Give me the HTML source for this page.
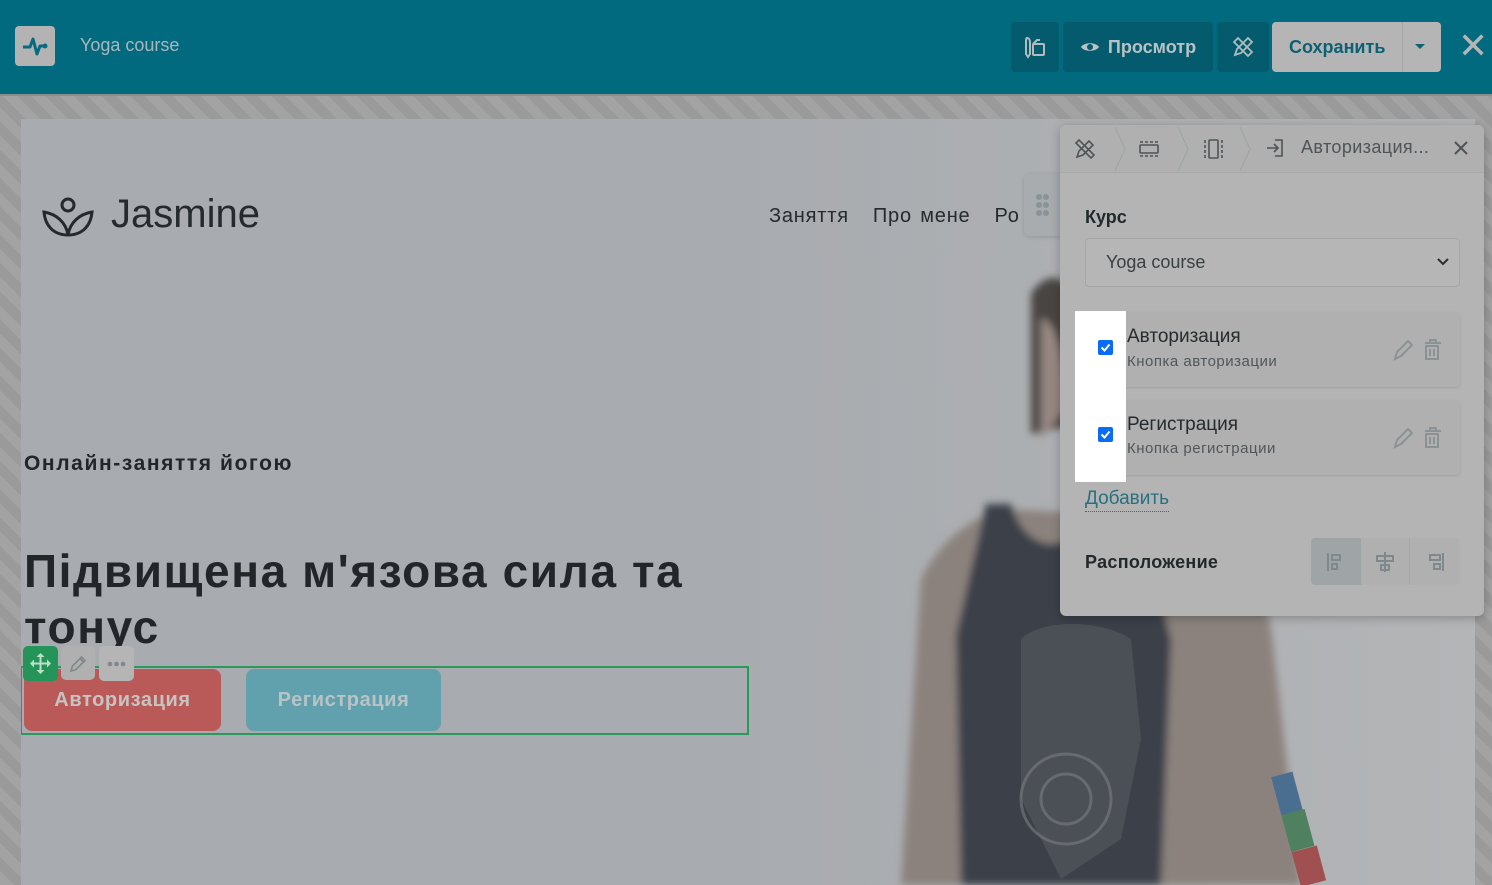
<!DOCTYPE html>
<html><head><meta charset="utf-8"><style>
*{box-sizing:border-box;margin:0;padding:0}
body{width:1492px;height:885px;overflow:hidden;position:relative;font-family:"Liberation Sans","DejaVu Sans",sans-serif;background:repeating-linear-gradient(45deg,#a3a3a3 0 10px,#9a9a9a 10px 20px)}
.top{position:absolute;left:0;top:0;width:1492px;height:94px;background:#026a7f}
.logo{position:absolute;left:15px;top:26px;width:40px;height:40px;background:#b3b3b3;border-radius:4px}
.title{position:absolute;left:80px;top:35px;color:#a9b6ba;font-size:18px}
.tb{position:absolute;top:22px;height:50px;background:#035b6d;border-radius:4px;color:#b9c2c4;font-weight:bold;font-size:18px;display:flex;align-items:center;justify-content:center}
.page{position:absolute;left:21px;top:119px;width:1454px;height:766px;background:#a8abaf;overflow:hidden}
.panel{position:absolute;left:1060px;top:125px;width:424px;height:491px;background:#b4b4b4;border-radius:6px;box-shadow:0 2px 10px rgba(0,0,0,.25)}
.ph{height:48px;border-bottom:1px solid #a8a8a8;background:#b0b0b0;border-radius:6px 6px 0 0;position:relative}
.item{position:absolute;left:25px;width:375px;height:75px;background:#b0b0b0;border-radius:4px;box-shadow:0 1px 2px rgba(0,0,0,.12)}
.chk{position:absolute}
</style></head><body>
<div class="top">
 <div class="logo"><svg width="40" height="40" viewBox="0 0 40 40"><path d="M8 21h7l3-8 4 15 3-8h4" fill="none" stroke="#066a80" stroke-width="3" stroke-linejoin="round"/><circle cx="30" cy="20" r="2.5" fill="#066a80"/></svg></div>
 <div class="title">Yoga course</div>
 <div class="tb" style="left:1011px;width:48px"><svg width="28" height="28" viewBox="0 0 28 28" fill="none" stroke="#b0bcbe" stroke-width="2"><path d="M6 5c2 0 3 2 3 4v12l-2 3-2-3V9c0-2 0-4 1-4z"/><rect x="12" y="11" width="11" height="11" rx="1"/><path d="M12 11l4-4h3"/></svg></div>
 <div class="tb" style="left:1063px;width:150px"><svg width="20" height="14" viewBox="0 0 20 14" style="margin-right:8px"><path d="M1 7c3-5 15-5 18 0-3 5-15 5-18 0z" fill="#b9c2c4"/><circle cx="10" cy="7" r="3" fill="#035b6d"/></svg>Просмотр</div>
 <div class="tb" style="left:1217px;width:52px"><svg width="24" height="24" viewBox="0 0 24 24" fill="none" stroke="#b0bcbe" stroke-width="1.8"><path d="M4 20l2-6L17 3l4 4L10 18z"/><path d="M3 7l4-4 14 14-4 4z"/></svg></div>
 <div class="tb" style="left:1272px;width:169px;background:#b5b5b5;color:#0c6172;justify-content:flex-start;padding-left:17px">Сохранить<span style="position:absolute;left:130px;top:0;width:1px;height:50px;background:#a5a5a5"></span><span style="position:absolute;left:143px;top:22px;border:5px solid transparent;border-top-color:#0c6172"></span></div>
 <div style="position:absolute;left:1458px;top:26px;color:#b5b5b5;font-size:36px;font-weight:bold;line-height:40px">✕</div>
</div>
<div style="position:absolute;left:0;top:94px;width:1492px;height:2px;background:#8c8c8c"></div>
<div class="page">
 <svg style="position:absolute;left:0;top:0" width="1454" height="766" viewBox="0 0 1454 766">
  <defs><filter id="b" x="-20%" y="-20%" width="140%" height="140%"><feGaussianBlur stdDeviation="4"/></filter>
  <linearGradient id="g" x1="0" x2="1"><stop offset="0" stop-color="#a8abaf"/><stop offset="1" stop-color="#b3b5b7"/></linearGradient></defs>
  <rect x="700" y="0" width="754" height="766" fill="url(#g)"/>
  <g filter="url(#b)">
   <path d="M1010 175c15-25 40-20 40 10l5 120-45 10z" fill="#4a4442"/>
   <path d="M1020 200c15 0 25 40 25 90l-25 30z" fill="#958781"/>
   <path d="M900 460c20-40 50-60 80-70l200 10c40 20 60 60 70 110l30 256H880z" fill="#8b827d"/>
   <path d="M965 385l25 0c15 50 60 55 80 5l60 20c10 40 10 80 20 110l-10 246H940l-5-250z" fill="#3a4149"/>
  </g>
  <rect x="1255" y="655" width="22" height="40" fill="#4a6e90" transform="rotate(-15 1265 675)"/>
  <rect x="1265" y="693" width="24" height="38" fill="#4f8060" transform="rotate(-15 1275 712)"/>
  <rect x="1275" y="730" width="26" height="36" fill="#a05050" transform="rotate(-15 1285 748)"/>
  <path d="M1000 520c20-20 80-20 110 0l10 100-20 100-60 40-40-80z" fill="#53575c" opacity=".7"/>
  <circle cx="1045" cy="680" r="45" fill="none" stroke="#7a7d82" stroke-width="3" opacity=".6"/>
  <circle cx="1045" cy="680" r="25" fill="none" stroke="#7a7d82" stroke-width="3" opacity=".6"/>
 </svg>
 <svg style="position:absolute;left:20px;top:76px" width="56" height="42" viewBox="0 0 56 42" fill="none" stroke="#242a2c" stroke-width="3"><circle cx="27" cy="10" r="6"/><path d="M27 40C12 40 4 30 3 17c12 2 22 10 24 23zM27 40c15 0 23-10 24-23-12 2-22 10-24 23z"/></svg>
 <div style="position:absolute;left:90px;top:73px;font-size:40px;color:#252a2c">Jasmine</div>
 <div style="position:absolute;left:748px;top:86px;font-size:20px;color:#252a2c;white-space:nowrap;letter-spacing:.8px;word-spacing:2px">Заняття<span style="margin-left:24px">Про мене</span><span style="margin-left:24px">Ро</span></div>
 <div style="position:absolute;left:3px;top:333px;font-size:21px;font-weight:bold;color:#232628;letter-spacing:1.6px">Онлайн-заняття йогою</div>
 <div style="position:absolute;left:3px;top:424px;font-size:46px;font-weight:bold;color:#232628;line-height:56px;width:760px;letter-spacing:1.6px">Підвищена м'язова сила та тонус</div>
 <div style="position:absolute;left:-1px;top:547px;width:729px;height:69px;border:2px solid #2a9a5a"></div>
 <div style="position:absolute;left:3px;top:550px;width:197px;height:62px;background:#b95a58;border-radius:8px;color:#c8c3c0;font-weight:bold;font-size:20px;letter-spacing:.6px;display:flex;align-items:center;justify-content:center">Авторизация</div>
 <div style="position:absolute;left:225px;top:550px;width:195px;height:62px;background:#61a0ad;border-radius:8px;color:#b8c3c6;font-weight:bold;font-size:20px;letter-spacing:.6px;display:flex;align-items:center;justify-content:center">Регистрация</div>
 <div style="position:absolute;left:2px;top:527px;width:35px;height:35px;background:#249458;border-radius:5px"><svg width="35" height="35" viewBox="0 0 35 35" fill="#c0dccb"><path d="M17.5 7l4 4h-3v5.5h5.5v-3l4 4-4 4v-3h-5.5V24h3l-4 4-4-4h3v-5.5H11v3l-4-4 4-4v3h5.5V11h-3z"/></svg></div>
 <div style="position:absolute;left:40px;top:527px;width:34px;height:34px;background:#b0b0b0;border-radius:5px"><svg width="34" height="34" fill="none" stroke="#80888c" stroke-width="1.6"><path d="M10 25l1.5-5 9-9 3.5 3.5-9 9z M19 12.5l3.5 3.5"/></svg></div>
 <div style="position:absolute;left:78px;top:527px;width:35px;height:35px;background:#b5b5b5;border-radius:5px"><svg width="35" height="35" fill="#80868a"><circle cx="11" cy="18" r="2.3"/><circle cx="17.5" cy="18" r="2.3"/><circle cx="24" cy="18" r="2.3"/></svg></div>
 <div style="position:absolute;left:1003px;top:55px;width:40px;height:62px;background:#a9acae;border-radius:6px 0 0 6px;box-shadow:0 1px 4px rgba(0,0,0,.15)"><svg width="40" height="62"><g fill="#8a9498"><circle cx="15" cy="23" r="3"/><circle cx="22" cy="23" r="3"/><circle cx="15" cy="31" r="3"/><circle cx="22" cy="31" r="3"/><circle cx="15" cy="39" r="3"/><circle cx="22" cy="39" r="3"/></g></svg></div>
</div>
<div class="panel">
 <div class="ph">
  <svg width="424" height="48" viewBox="0 0 424 48" fill="none" stroke="#4e5457" stroke-width="1.6">
   <path d="M17 32l2-6 10-10 4 4-10 10z M16 18l3-3 15 15-3 3z"/>
   <path d="M55 2l10 22-10 22 M118 2l10 22-10 22 M180 2l10 22-10 22" stroke="#9aa3a7" stroke-width="1"/>
   <path d="M80 17h18M80 31h18" stroke-dasharray="3 2"/><rect x="80" y="20" width="18" height="8" rx="1"/>
   <path d="M145 15v18M162 15v18" stroke-dasharray="3 2"/><rect x="149" y="15" width="9" height="18" rx="1"/>
   <path d="M207 23h11M214 19l4 4-4 4M215 15h7v16h-7"/>
   <path d="M395 17l12 12M407 17l-12 12" stroke-width="2"/>
  </svg>
  <div style="position:absolute;left:241px;top:12px;font-size:18px;color:#4e5457;letter-spacing:.4px">Авторизация...</div>
 </div>
 <div style="position:absolute;left:25px;top:82px;font-size:18px;font-weight:bold;color:#22292c">Курс</div>
 <div style="position:absolute;left:25px;top:113px;width:375px;height:49px;border:1px solid #a5a5a5;border-radius:4px;background:#b6b6b6;font-size:18px;color:#3a3f42;padding:13px 20px">Yoga course<svg style="position:absolute;right:10px;top:19px" width="12" height="8" fill="none" stroke="#2a2f32" stroke-width="2"><path d="M1 1l5 5 5-5"/></svg></div>
 <div class="item" style="top:187px"></div>
 <div class="item" style="top:275px"></div>
 <div style="position:absolute;left:15px;top:186px;width:51px;height:171px;background:#fff"></div>
 <svg class="chk" style="left:38px;top:215px" width="15" height="15"><rect width="15" height="15" rx="2" fill="#0a6cf5"/><path d="M3.5 7.5l3 3 5-6" fill="none" stroke="#fff" stroke-width="2"/></svg>
 <svg class="chk" style="left:38px;top:302px" width="15" height="15"><rect width="15" height="15" rx="2" fill="#0a6cf5"/><path d="M3.5 7.5l3 3 5-6" fill="none" stroke="#fff" stroke-width="2"/></svg>
 <div style="position:absolute;left:67px;top:201px;font-size:19px;color:#262b2e">Авторизация</div>
 <div style="position:absolute;left:67px;top:228px;font-size:15px;color:#50575a;letter-spacing:.5px">Кнопка авторизации</div>
 <div style="position:absolute;left:67px;top:289px;font-size:19px;color:#262b2e">Регистрация</div>
 <div style="position:absolute;left:67px;top:315px;font-size:15px;color:#50575a;letter-spacing:.5px">Кнопка регистрации</div>
 <svg style="position:absolute;left:330px;top:210px" width="60" height="160" fill="none" stroke="#8a9296" stroke-width="2"><path d="M5 24l2-7 11-11 4 4-11 11z"/><path d="M35 8h16M40 8v-3h6v3M36 11h12v13H36zM40 14v7M44 14v7"/><g transform="translate(0,88)"><path d="M5 24l2-7 11-11 4 4-11 11z"/><path d="M35 8h16M40 8v-3h6v3M36 11h12v13H36zM40 14v7M44 14v7"/></g></svg>
 <div style="position:absolute;left:25px;top:362px;font-size:19px;color:#2a6f80;border-bottom:1px dotted #2a6f80;line-height:24px">Добавить</div>
 <div style="position:absolute;left:25px;top:427px;font-size:18px;font-weight:bold;color:#22292c;letter-spacing:.3px">Расположение</div>
 <div style="position:absolute;left:251px;top:413px;width:149px;height:47px;background:#b0b0b0;border-radius:4px;overflow:hidden;display:flex">
  <div style="width:50px;background:#9fa4a6"></div><div style="width:49px;border-right:1px solid #a8a8a8"></div>
 </div>
 <svg style="position:absolute;left:251px;top:413px" width="149" height="47" fill="none" stroke="#7f898d" stroke-width="2"><path d="M17 15v18M21 17h8v5h-8zM21 26h5v5h-5z"/><path d="M74 14v20M66 18h16v5H66zM70 27h8v5h-8z"/><path d="M132 15v18M119 17h10v5h-10zM123 26h6v5h-6z"/></svg>
</div>
</body></html>
